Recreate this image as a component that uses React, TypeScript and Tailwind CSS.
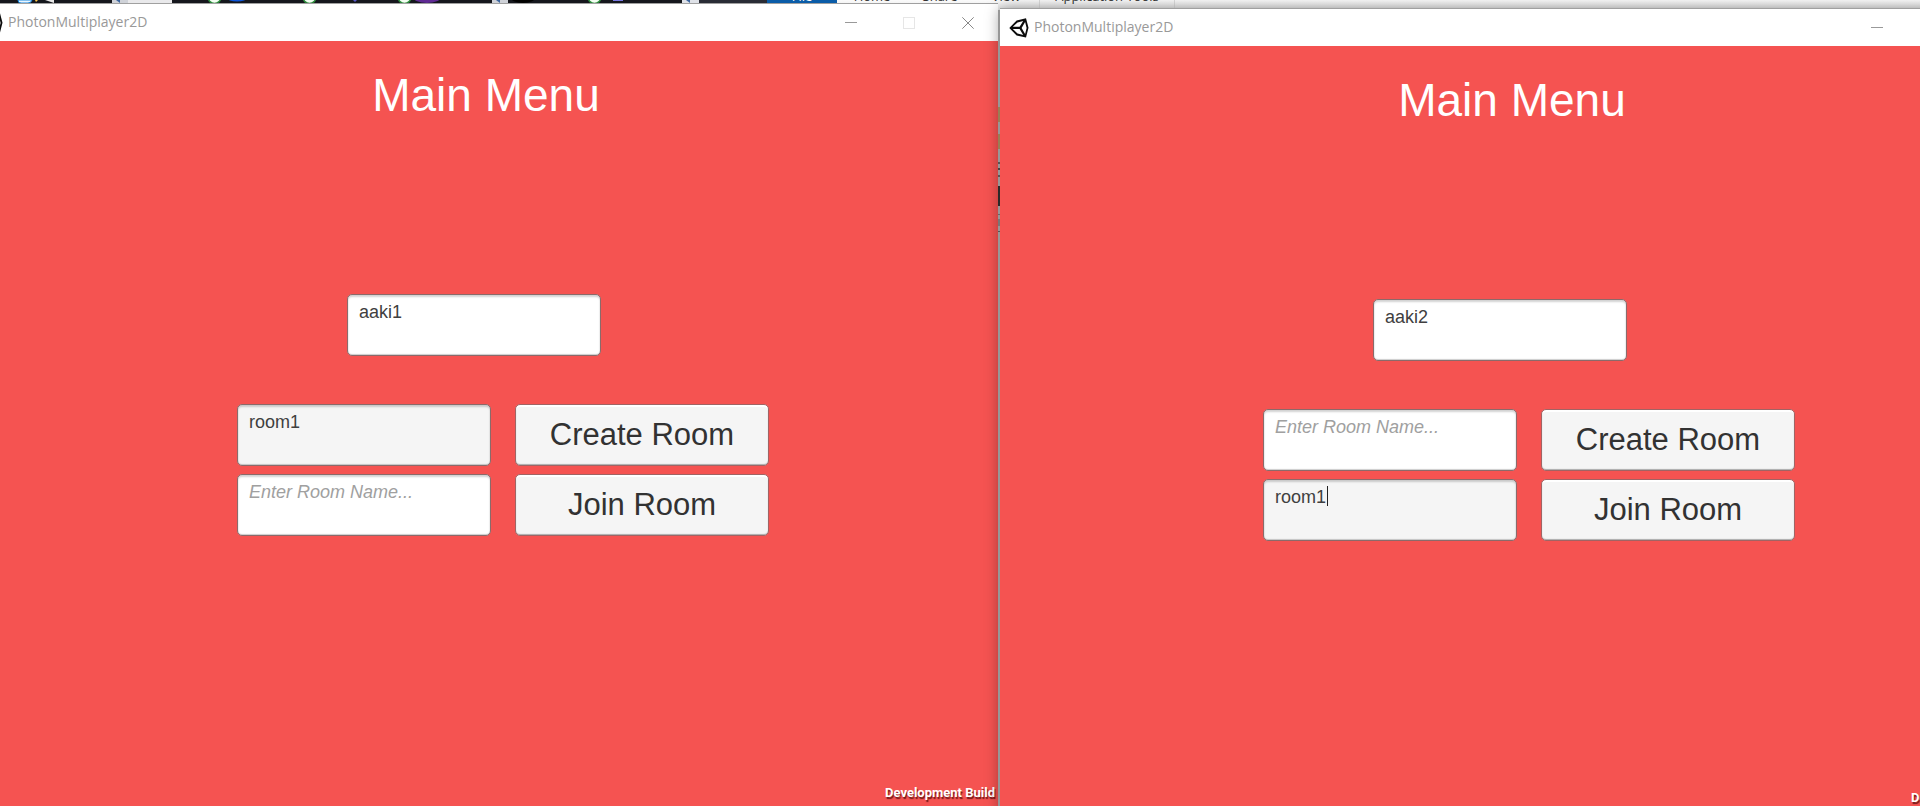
import { useState } from "react";

type WindowProps = {
  id: string;
  className: string;
  player: string;
  create: string;
  join: string;
  active: "create" | "join";
  caret?: boolean;
};

const fieldBase =
  "h-[62px] w-[254px] rounded-[5px] border border-[#8b6a6a] px-[11px] pt-[7px] pb-[33px] text-[18px] leading-5 text-[#404040] outline-none placeholder:text-[#a0a0a0] placeholder:italic placeholder:opacity-100 shadow-[inset_0_2px_2px_rgba(0,0,0,0.18),inset_0_-1px_1px_rgba(0,0,0,0.2)]";

const buttonBase =
  "h-[62px] w-[254px] rounded-[5px] border border-[#a06464] bg-[#f5f5f5] text-[31px] leading-9 text-[#323232] shadow-[inset_0_2px_0_#ffffff,inset_0_-1px_1px_rgba(0,0,0,0.3)]";

function UnityLogo() {
  return (
    <svg className="h-5 w-5 shrink-0" viewBox="0 0 20 20" fill="none" aria-hidden="true">
      <path
        fill="#0c0c0c"
        fillRule="evenodd"
        d="M0.300 10L7.600 2.600L17 0.300L19.500 9.800L17 19.600L7.600 17.400ZM3.800 8.800H10.600L14.200 2.900L8.500 4.500ZM3.800 11.100L8.500 15.400L14.200 17L10.600 11.100ZM16.100 3.900L12.600 9.900L16.100 16L17.600 9.900Z"
      />
    </svg>
  );
}

function Field(props: { id: string; label: string; initial: string; placeholder: string; active: boolean; caret?: boolean }) {
  const [value, setValue] = useState(props.initial);
  return (
    <div className="relative flex">
      <input
        id={props.id}
        aria-label={props.label}
        value={value}
        placeholder={props.placeholder}
        onChange={(e) => setValue(e.target.value)}
        className={`${fieldBase} ${props.active ? "bg-[#f5f5f5]" : "bg-white"}`}
      />
      {props.caret && <span className="absolute top-[7px] left-[64px] h-5 w-px bg-[#222]" />}
    </div>
  );
}

function GameWindow({ id, className, player, create, join, active, caret }: WindowProps) {
  return (
    <section className={`absolute flex w-[1024px] flex-col ${className}`}>
      <header className="flex h-[37px] shrink-0 items-center bg-white pl-[9px]">
        <UnityLogo />
        <span className="ml-[5px] flex-1 pb-px font-['Open_Sans','Noto_Sans',sans-serif] text-[14px] leading-5 text-[#999999]">PhotonMultiplayer2D</span>
        <button aria-label="Minimize" className="flex h-full w-[58px] items-center justify-center">
          <span className="h-px w-3 bg-[#999]" />
        </button>
        <button aria-label="Maximize" className="flex h-full w-[58px] items-center justify-center">
          <span className="size-3 border border-[#e6e6e6]" />
        </button>
        <button aria-label="Close" className="flex h-full w-[60px] items-center justify-center">
          <svg className="size-3" viewBox="0 0 12 12" stroke="#888" strokeWidth="1" aria-hidden="true">
            <path d="M0.3 0.3L11.7 11.7M11.7 0.3L0.3 11.7" />
          </svg>
        </button>
      </header>
      <main className="flex h-[768px] flex-col bg-[#f55351] font-['Liberation_Sans',Arial,sans-serif]">
        <h1 className="mt-7 text-center text-[46px] leading-[52px] text-white">Main Menu</h1>
        <div className="mt-[173px] flex justify-center pr-6">
          <Field id={`${id}-player`} label="Player name" initial={player} placeholder="Enter Player Name..." active={false} />
        </div>
        <div className="mt-12 flex justify-center pl-[34px]">
          <div className="grid grid-cols-[auto_auto] gap-x-6 gap-y-2">
            <Field id={`${id}-create`} label="Room to create" initial={create} placeholder="Enter Room Name..." active={active === "create"} />
            <button className={buttonBase}>Create Room</button>
            <Field id={`${id}-join`} label="Room to join" initial={join} placeholder="Enter Room Name..." active={active === "join"} caret={caret} />
            <button className={buttonBase}>Join Room</button>
          </div>
        </div>
        <p className="mt-auto mb-[6px] pr-[3px] text-right font-[Roboto,sans-serif] text-[13px] leading-5 font-bold text-white [text-shadow:1px_2px_1px_rgba(60,0,0,0.7)]">
          Development Build
        </p>
      </main>
    </section>
  );
}

function Backdrop() {
  return (
    <div className="flex h-[14px] overflow-hidden">
      <svg className="h-[14px] w-[767px] shrink-0" viewBox="0 0 767 14" aria-hidden="true">
        <rect width="767" height="14" fill="#15171d" />
        <path d="M18 0H32Q31 3 28 3H21Q18 3 18 0Z" fill="#eaf6ff" stroke="#1687e0" />
        <path d="M35 0H38L36 2Z" fill="#ffc94a" />
        <path d="M45 0H54V3Z" fill="#e8e8e8" />
        <rect x="112" width="60" height="4" fill="#e9e9eb" />
        <rect x="112" width="16" height="4" fill="#cfd2d8" />
        <path d="M116 0H120V3Z" fill="#3c66a0" />
        <g fill="#f2fff2" stroke="#2b8a3a" strokeWidth="1.5">
          <circle cx="214.500" cy="-3" r="6.500" />
          <circle cx="309.500" cy="-3" r="6.500" />
          <circle cx="404.500" cy="-3" r="6.500" />
          <circle cx="594.500" cy="-3" r="6.500" />
        </g>
        <ellipse cx="237" cy="-2" rx="10" ry="3.500" fill="#0d55d8" />
        <path d="M353 0H357L355 2Z" fill="#5757c8" />
        <ellipse cx="427" cy="-3" rx="14" ry="6" fill="#5f2a93" />
        <rect x="492" width="16" height="4" fill="#cfd2d8" />
        <path d="M496 0H500V3Z" fill="#3c66a0" />
        <ellipse cx="523" cy="-2" rx="12" ry="5" fill="#000" />
        <rect x="613" width="10" height="1" fill="#7878e0" />
        <rect x="682" width="17" height="4" fill="#dfe2e8" />
        <path d="M686 0H690V3Z" fill="#3c66a0" />
        <rect x="699" width="68" height="4" fill="#292c35" />
      </svg>
      <nav className="-mt-[13px] flex flex-1 bg-[#f5f5f5] bg-linear-to-b from-[#fafafa] from-50% to-[#dadada] font-['Open_Sans',sans-serif] text-[13px] leading-[18px] whitespace-nowrap text-[#333]">
        <a href="#file" className="flex h-[27px] w-[70px] justify-center bg-[#0a5ca8] text-white">File</a>
        <a href="#home" className="w-[70px] text-center">Home</a>
        <a href="#share" className="w-[66px] text-center">Share</a>
        <a href="#view" className="w-[66px] text-center">View</a>
        <a href="#tools" className="h-[27px] w-[136px] border-x border-[#dcdcdc] text-center">Application Tools</a>
      </nav>
    </div>
  );
}

export default function App() {
  return (
    <div className="relative h-screen overflow-hidden bg-[#999999]">
      <Backdrop />
      <GameWindow
        id="first"
        className="-left-[26px] top-1 shadow-[0_-1px_0_#a0a0a0]"
        player="aaki1"
        create="room1"
        join=""
        active="create"
      />
      <GameWindow
        id="second"
        className="left-[1000px] top-[9px] shadow-[0_-1px_0_#a0a0a0,0_0_14px_rgba(0,0,0,0.4)]"
        player="aaki2"
        create=""
        join="room1"
        active="join"
        caret
      />
      <svg className="absolute top-[10px] left-[998px] h-[806px] w-[2px]" viewBox="0 10 2 806" aria-hidden="true">
        <rect y="10" width="2" height="806" fill="#979797" />
        <rect y="107" width="2" height="15" fill="#987f55" />
        <rect y="134" width="2" height="15" fill="#987f55" />
        <rect y="162" width="2" height="2" fill="#555" />
        <rect y="168" width="2" height="2" fill="#444" />
        <rect y="175" width="2" height="2" fill="#555" />
        <rect y="186" width="2" height="20" fill="#292929" />
        <rect y="214" width="2" height="1" fill="#666" />
        <rect y="219" width="2" height="7" fill="#777" />
        <rect y="231" width="2" height="1" fill="#555" />
      </svg>
    </div>
  );
}
